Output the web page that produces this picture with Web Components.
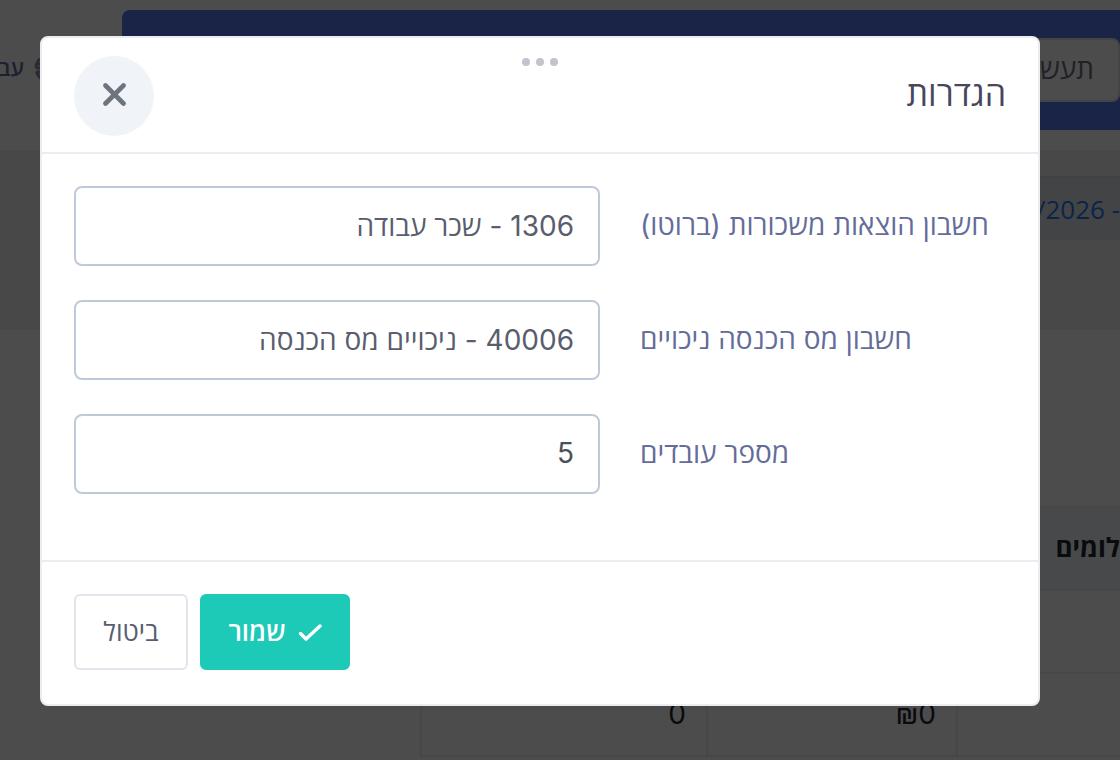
<!DOCTYPE html>
<html lang="he" dir="rtl">
<head>
<meta charset="utf-8">
<title>הגדרות</title>
<style>
  html, body { margin: 0; height: 100%; }
  body {
    background: #fff;
    color: #212529;
    font: 400 28px/40px Inter, "Open Sans", "Liberation Sans", sans-serif;
    overflow: hidden;
  }
</style>
</head>
<body>
<payroll-page></payroll-page>
<settings-dialog heading="הגדרות">
  <form-field label="חשבון הוצאות משכורות (ברוטו)" value="1306 - שכר עבודה"></form-field>
  <form-field label="חשבון מס הכנסה ניכויים" value="40006 - ניכויים מס הכנסה"></form-field>
  <form-field label="מספר עובדים" value="5" plain></form-field>
  <action-button slot="actions" kind="primary">שמור</action-button>
  <action-button slot="actions">ביטול</action-button>
</settings-dialog>

<script>
const attach = (host, html) => {
  const t = document.createElement('template');
  t.innerHTML = '<style>*{box-sizing:border-box}</style>' + html;
  host.attachShadow({ mode: 'open' }).append(t.content.cloneNode(true));
  return host.shadowRoot;
};

customElements.define('top-bar', class extends HTMLElement {
  constructor() {
    super();
    attach(this, `
      <style>
        :host { display: flex; height: 150px; padding: 10px 0 20px; }
        .brand { flex: 1; background: #5578eb; border-top-left-radius: 8px; border-bottom-left-radius: 8px; padding: 28px 0; }
        input { display: block; width: 320px; height: 64px; font: inherit; color: #6c6e86; background: #fff;
                border: 2px solid #e2e5ec; border-radius: 8px; padding: 0 24px 4px; }
        .lang { flex: none; width: 122px; display: flex; align-items: center;
                gap: 10px; padding: 0 58px 4px 0; font-size: 22px; font-weight: 600; color: #646c9a; }
        .lang svg { flex: none; }
      </style>
      <div class="brand"><input aria-label="חברה" value="תעש"></div>
      <div class="lang">
        <svg width="30" height="30" viewBox="0 0 30 30" fill="none" stroke="#8c8ea4" stroke-width="3" aria-hidden="true">
          <circle cx="15" cy="15" r="13" stroke-dasharray="10 3.6"/><ellipse cx="15" cy="15" rx="6" ry="13"/><path d="M2 11h26M2 15h26M2 19h26"/>
        </svg>
        <span>עב</span>
      </div>`);
  }
});

customElements.define('period-bar', class extends HTMLElement {
  constructor() {
    super();
    attach(this, `
      <style>
        :host { display: block; height: 180px; padding-top: 26px; background: #f0f0f3; }
        nav { width: 400px; height: 64px; display: flex; align-items: center; background: #e2e4ec; border-top: 2px solid #d8dae2; }
        a { color: #2878f0; text-decoration: none; direction: ltr; white-space: pre;
            font-family: "Open Sans", sans-serif; font-size: 26px; font-weight: 500; }
      </style>
      <nav><a href="#period">/2026 -</a></nav>`);
  }
});

customElements.define('payments-table', class extends HTMLElement {
  constructor() {
    super();
    attach(this, `
      <style>
        :host { display: block; padding-top: 176px; padding-left: 420px; }
        table { width: 100%; border-collapse: collapse; table-layout: fixed; }
        th, td { height: 83px; padding: 0 20px 2px; text-align: right; border: 2px solid #ebedf2; font-weight: 400; color: #212529; }
        th { background: #f0f3f8; font-weight: 700; font-size: 26px; }
        tr > :first-child { width: 163px; padding-right: 0; border-right: 0; }
        tr > :nth-child(2) { width: 250px; }
      </style>
      <table>
        <thead><tr><th>לומים</th><th></th><th></th></tr></thead>
        <tbody>
          <tr><td></td><td></td><td></td></tr>
          <tr><td></td><td>₪0</td><td>0</td></tr>
        </tbody>
      </table>`);
  }
});

customElements.define('payroll-page', class extends HTMLElement {
  constructor() {
    super();
    attach(this, `
      <style>:host { display: block; }</style>
      <top-bar></top-bar>
      <period-bar></period-bar>
      <payments-table></payments-table>`);
  }
});

customElements.define('form-field', class extends HTMLElement {
  connectedCallback() {
    if (this.shadowRoot) return;
    const root = attach(this, `
      <style>
        :host { display: grid; grid-template-columns: 406fr 526fr; align-items: center; }
        label { text-align: left; padding: 0 0 2px 40px; color: #646c9a; white-space: nowrap; }
        input { width: 100%; height: 80px; font: inherit; color: #595d6e; background: #fff;
                border: 2px solid #c0c9d8; border-radius: 8px; padding: 0 24px 2px; outline: 0; }
        :host([plain]) input { color: #495057; }
      </style>
      <label for="field"></label><input id="field" type="text">`);
    root.querySelector('label').textContent = this.getAttribute('label');
    root.querySelector('input').value = this.getAttribute('value');
  }
});

customElements.define('action-button', class extends HTMLElement {
  connectedCallback() {
    if (this.shadowRoot) return;
    const primary = this.getAttribute('kind') === 'primary';
    attach(this, `
      <style>
        :host { display: block; }
        button { display: flex; align-items: center; justify-content: center; gap: 12px; height: 76px; min-width: 114px;
                 padding: 0 26px; font: inherit; font-size: 26px; color: #595d6e; background: #fff;
                 border: 2px solid #e2e5ec; border-radius: 6px; }
        :host([kind=primary]) button { min-width: 150px; color: #fff; background: #1dc9b7; border-color: #1dc9b7; font-weight: 600; }
      </style>
      <button type="button">${primary ? '<svg width="24" height="18" viewBox="0 0 24 18" fill="none" stroke="#fff" stroke-width="3.4" stroke-linecap="round" stroke-linejoin="round" aria-hidden="true"><path d="M2.5 10.5l5.5 5.5L22 3"/></svg>' : ''}<slot></slot></button>`);
  }
});

customElements.define('settings-dialog', class extends HTMLElement {
  connectedCallback() {
    if (this.shadowRoot) return;
    const root = attach(this, `
      <style>
        :host { position: fixed; inset: 0; background: rgba(0, 0, 0, .7); padding: 36px 80px 54px 40px; }
        section { position: relative; background: #fff; border: 2px solid #ebedf2; border-radius: 8px; }
        header { display: flex; align-items: center; justify-content: space-between; padding: 18px 32px 16px; border-bottom: 2px solid #ebedf2; }
        h2 { margin: 0; padding-bottom: 4px; font-size: 34px; line-height: 48px; font-weight: 400; color: #48465b; }
        .close { width: 80px; height: 80px; display: grid; place-items: center; padding: 0 0 4px; border: 0; border-radius: 50%; background: #f0f3f8; }
        .grip { position: absolute; top: 20px; left: 0; right: 0; display: flex; justify-content: center; gap: 6px; }
        .grip i { width: 8px; height: 8px; border-radius: 50%; background: #c4c3cc; }
        .fields { display: grid; gap: 34px; padding: 32px 32px 66px; }
        footer { display: flex; justify-content: flex-end; gap: 12px; padding: 32px 32px 34px; border-top: 2px solid #ebedf2; }
      </style>
      <section role="dialog" aria-labelledby="heading">
        <div class="grip" aria-hidden="true"><i></i><i></i><i></i></div>
        <header>
          <h2 id="heading"></h2>
          <button class="close" type="button" aria-label="סגור">
            <svg width="24" height="24" viewBox="0 0 24 24" fill="none" stroke="#6c757d" stroke-width="4.6" stroke-linecap="round"><path d="M3.5 3.5l18 18M21.5 3.5L3.5 21.5"/></svg>
          </button>
        </header>
        <div class="fields"><slot></slot></div>
        <footer><slot name="actions"></slot></footer>
      </section>`);
    root.querySelector('h2').textContent = this.getAttribute('heading');
  }
});
</script>
</body>
</html>
